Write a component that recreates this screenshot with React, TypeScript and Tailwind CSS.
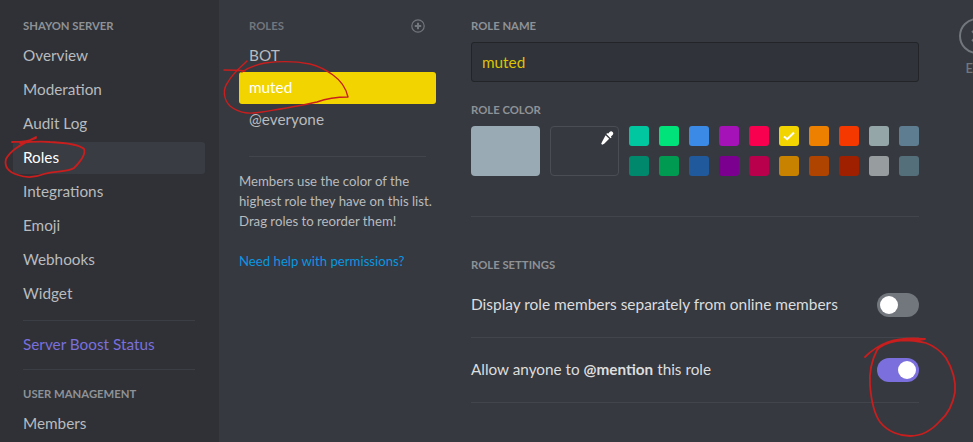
const row1 = ["#00c7a0","#00e27a","#3b8ae6","#a512b8","#f8004f","#f2d500","#ee8000","#f53700","#95a6a8","#5f7d90"];
const row2 = ["#00886c","#009a50","#205a9c","#7b0090","#b8004c","#c88200","#ae4400","#9e2000","#979c9f","#546e7a"];
const font = { fontFamily: 'Lato, sans-serif' };

function NavItem({ label, active, purple }: { label: string; active?: boolean; purple?: boolean }) {
  return (
    <div className={`h-8 rounded-[3px] pl-[10px] pb-[2px] mb-[2px] flex items-center text-[15.3px] ${active ? "bg-[#393c43] text-white" : purple ? "text-[#7b6fdd]" : "text-[#b9bbbe]"}`}>
      {label}
    </div>
  );
}

function Heading({ children, className = "" }: { children: React.ReactNode; className?: string }) {
  return <div className={`text-[11.3px] leading-4 font-bold uppercase ${className}`}>{children}</div>;
}

function Toggle({ on }: { on?: boolean }) {
  return (
    <div className={`w-[42px] h-6 rounded-full flex items-center shrink-0 px-[3px] ${on ? "bg-[#7b6fdd] justify-end" : "bg-[#72767d] justify-start"}`}>
      <div className="w-[18px] h-[18px] rounded-full bg-white" />
    </div>
  );
}

function Swatch({ color, checked }: { color: string; checked?: boolean }) {
  return (
    <div className="w-5 h-5 rounded-[3px] flex items-center justify-center" style={{ backgroundColor: color }}>
      {checked && (
        <svg width="12" height="10" viewBox="0 0 12 10" fill="none">
          <path d="M1 5.5 L4.2 8.2 L11 1.5" stroke="#fff" strokeWidth="2" />
        </svg>
      )}
    </div>
  );
}

export default function App() {
  return (
    <div className="relative w-[973px] h-[442px] overflow-hidden flex bg-[#36393f]" style={font}>
      <aside className="w-[219px] h-full shrink-0 bg-[#2f3136] pl-[13px] pr-[14px] pt-[18px] overflow-hidden">
        <Heading className="pl-[10px] text-[#8e9297] mb-[6px]">Shayon Server</Heading>
        <NavItem label="Overview" />
        <NavItem label="Moderation" />
        <NavItem label="Audit Log" />
        <NavItem label="Roles" active />
        <NavItem label="Integrations" />
        <NavItem label="Emoji" />
        <NavItem label="Webhooks" />
        <NavItem label="Widget" />
        <div className="h-px bg-[#3b3e44] ml-[10px] mr-[10px] mt-[10px] mb-2" />
        <NavItem label="Server Boost Status" purple />
        <div className="h-px bg-[#3b3e44] ml-[10px] mr-[10px] mt-[8px] mb-[16px]" />
        <Heading className="pl-[10px] text-[#8e9297] mb-[6px]">User Management</Heading>
        <NavItem label="Members" />
      </aside>

      <section className="w-[197px] shrink-0 ml-5 pt-[18px]">
        <div className="flex items-center justify-between pl-[10px] pr-[11px] mb-[6px] h-4">
          <Heading className="text-[#72767d]">Roles</Heading>
          <svg width="14" height="14" viewBox="0 0 14 14" fill="none">
            <circle cx="7" cy="7" r="6.2" stroke="#72767d" strokeWidth="1.2" />
            <path d="M7 3.8V10.2M3.8 7H10.2" stroke="#72767d" strokeWidth="2" />
          </svg>
        </div>
        <div className="h-8 rounded-[3px] pl-[10px] pb-[2px] flex items-center text-[15.3px] text-[#b9bbbe]">BOT</div>
        <div className="h-8 rounded-[3px] pl-[10px] pb-[2px] flex items-center text-[15.3px] text-white bg-[#f2d500]">muted</div>
        <div className="h-8 rounded-[3px] pl-[10px] pb-[2px] flex items-center text-[15.3px] text-[#b9bbbe]">@everyone</div>
        <div className="h-px bg-[#42454b] mx-[10px] mt-5 mb-[14px]" />
        <p className="text-[13.2px] leading-5 text-[#b9bbbe] whitespace-nowrap">
          Members use the color of the<br />highest role they have on this list.<br />Drag roles to reorder them!
        </p>
        <p className="text-[13.2px] leading-5 text-[#0a96e0] mt-5 whitespace-nowrap">Need help with permissions?</p>
      </section>

      <main className="w-[448px] shrink-0 ml-[35px] pt-[18px]">
        <Heading className="text-[#8e9297] mb-2">Role Name</Heading>
        <div className="h-10 rounded-[3px] border border-[#222428] bg-[#303339] flex items-center px-[10px] text-[15.3px] text-[#dcc400]">muted</div>
        <Heading className="text-[#8e9297] mt-5 mb-2">Role Color</Heading>
        <div className="flex">
          <div className="w-[69px] h-[50px] rounded-[4px] bg-[#99aab5]" />
          <div className="relative w-[69px] h-[50px] rounded-[4px] border border-[#4a4d53] ml-[10px]">
            <svg className="absolute top-[4px] right-[4px]" width="14" height="14" viewBox="0 0 14 14" fill="#fff">
              <path d="M9.6 0.9c0.9-0.9 2.2-0.9 3 0c0.9 0.8 0.9 2.1 0 3l-1.7 1.7 0.7 0.7-1 1-4.3-4.3 1-1 0.7 0.7z" />
              <path d="M5.6 4.2l3.6 3.6-5 5-2 0.9-1-1 0.9-2z" />
            </svg>
          </div>
          <div className="ml-[10px] flex flex-col gap-[10px]">
            <div className="flex gap-[10px]">
              {row1.map((c) => <Swatch key={c} color={c} checked={c === "#f2d500"} />)}
            </div>
            <div className="flex gap-[10px]">
              {row2.map((c) => <Swatch key={c} color={c} />)}
            </div>
          </div>
        </div>
        <div className="h-px bg-[#42454b] mt-10 mb-10" />
        <Heading className="text-[#8e9297]">Role Settings</Heading>
        <div className="h-[65px] flex items-center justify-between border-b border-[#42454b] text-[15.45px] text-[#dcddde]">
          <span className="pb-px">Display role members separately from online members</span>
          <Toggle />
        </div>
        <div className="h-[65px] flex items-center justify-between border-b border-[#42454b] text-[15.3px] text-[#dcddde]">
          <span className="pb-px">Allow anyone to <b className="font-bold">@mention</b> this role</span>
          <Toggle on />
        </div>
      </main>

      <div className="shrink-0 ml-10 pt-[18px] flex flex-col items-center w-9">
        <div className="w-9 h-9 rounded-full border-2 border-[#72767d] shrink-0 flex items-center justify-center">
          <svg width="18" height="18" viewBox="0 0 18 18"><path d="M4 4L14 14M14 4L4 14" stroke="#72767d" strokeWidth="2" /></svg>
        </div>
        <div className="text-[13px] font-semibold text-[#72767d] mt-[5px]">ESC</div>
      </div>

      <svg className="absolute inset-0 pointer-events-none" width="973" height="442" viewBox="0 0 973 442" fill="none" stroke="#c81e1e" strokeWidth="1.4" strokeLinejoin="round" strokeLinecap="round">
        <path d="M12 142C20 142 28 142 36 138M36 137C25 143 12 148 6 159C4 167 8 172 18 175C26 178 34 178 44 174C56 171 68 172 74 168C80 162 86 154 84 149C80 145 70 143 50 142C40 141 28 142 20 143" strokeWidth="1.8" />
        <path d="M224 70C230 70 238 70 245 71M247 61C240 68 233 73 228 82C222 90 224 100 230 106C240 114 250 114 262 112C280 109 300 106 317 102C328 98 340 97 348 97C346 88 340 80 333 75C326 70 318 66 310 64C295 61 280 61 265 63C255 65 248 68 242 72" />
        <path d="M865 357C872 350 880 345 888 342C900 338 915 338 925 339C915 341 905 340 896 341C885 343 880 346 877 350C871 362 869 372 870 385C871 398 873 412 880 422C888 432 900 436 910 436C922 436 932 430 940 421C948 414 953 404 955 392C956 380 952 368 946 358C940 350 934 346 926 343C918 341 908 340 900 340" strokeWidth="1.8" />
      </svg>
    </div>
  );
}
